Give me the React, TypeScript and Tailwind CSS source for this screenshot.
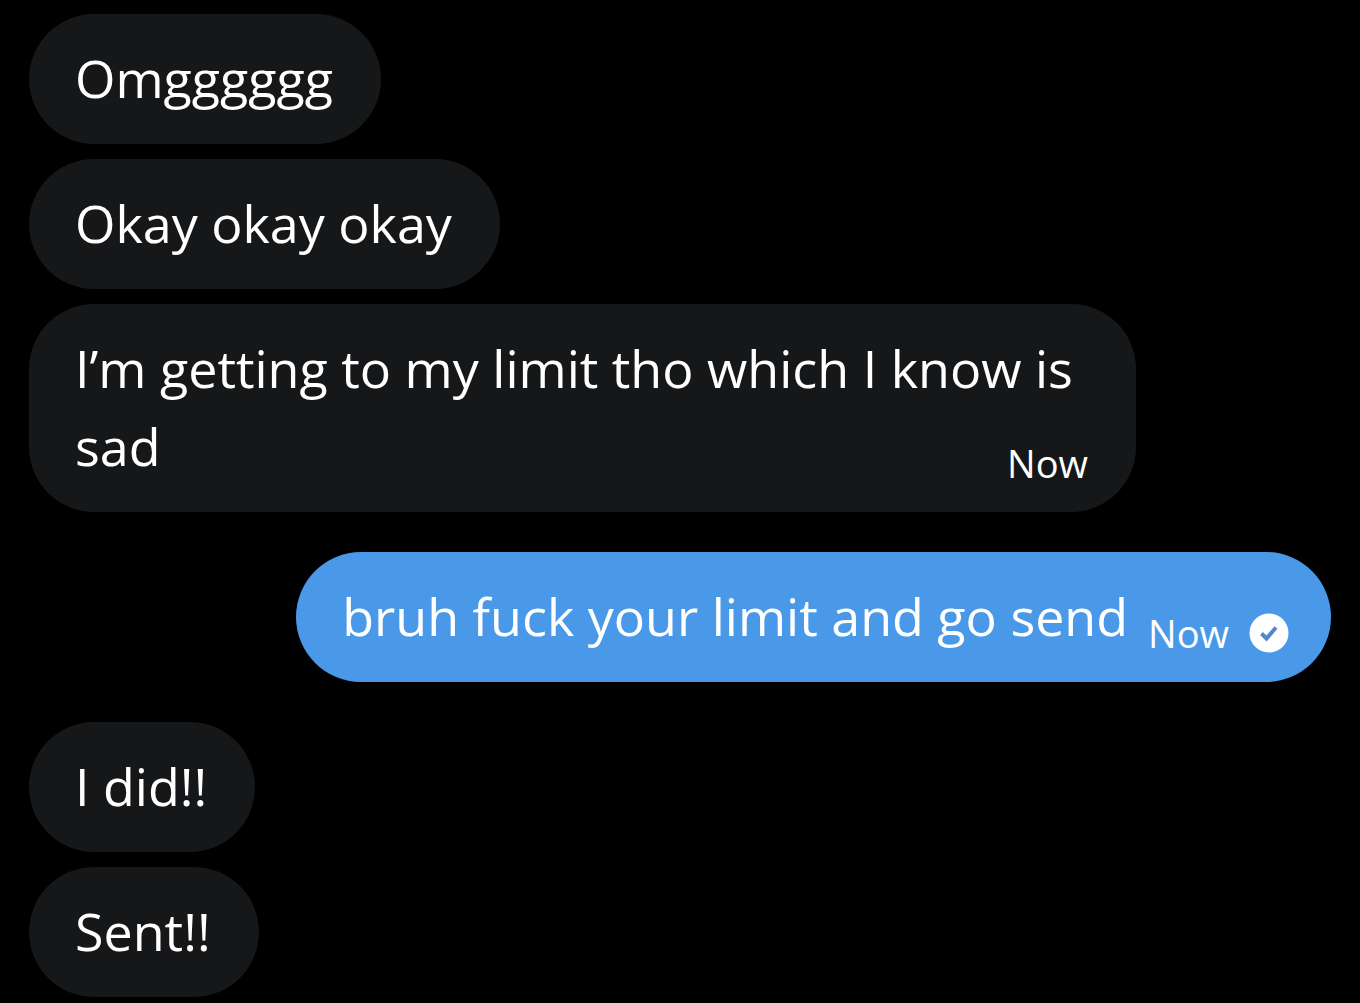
import React from 'react'

interface Message {
    id: number
    text: string
    time?: string
}

const firstMessages: Message[] = [
    { id: 1, text: 'Omgggggg' },
    { id: 2, text: 'Okay okay okay' },
    { id: 3, text: 'I’m getting to my limit tho which I know is sad', time: 'Now' }
]

const lastMessages: Message[] = [
    { id: 5, text: 'I did!!' },
    { id: 6, text: 'Sent!!' }
]

function Received({ message }: { message: Message }) {
    return (
        <li className="flow-root max-w-[1107px] rounded-[65px] bg-[#161719] pt-[25px] pr-[48px] pb-[27px] pl-[46px] text-white">
            {message.text}
            {message.time && (
                <time className="float-right mt-[34px] text-[38px] leading-[44px]">{message.time}</time>
            )}
        </li>
    )
}

function SentIcon() {
    return (
        <svg viewBox="0 0 40 40" className="size-10 shrink-0" role="img" aria-label="Sent">
            <circle cx="20" cy="20" r="19.5" fill="#fff" />
            <path d="M12.5 20.5l5 5 9.5-11" fill="none" stroke="#5288c9" strokeWidth="4" />
        </svg>
    )
}

export default function App() {
    return (
        <main className="min-h-screen bg-black px-[29px] pt-[14px] pb-[5px] font-['Open_Sans',sans-serif] text-[52px] leading-[78px]">
            <ul className="flex flex-col items-start gap-[15px]">
                {firstMessages.map(message => (
                    <Received key={message.id} message={message} />
                ))}
            </ul>

            <div className="my-10 flex justify-end">
                <div className="flex items-end rounded-[65px] bg-[#4a99e9] pt-[25px] pr-[42px] pb-[27px] pl-[46px] text-white">
                    <p>bruh fuck your limit and go send</p>
                    <div className="ml-5 flex items-center gap-5">
                        <time className="text-[38px] leading-[44px]">Now</time>
                        <SentIcon />
                    </div>
                </div>
            </div>

            <ul className="flex flex-col items-start gap-[15px]">
                {lastMessages.map(message => (
                    <Received key={message.id} message={message} />
                ))}
            </ul>
        </main>
    )
}
